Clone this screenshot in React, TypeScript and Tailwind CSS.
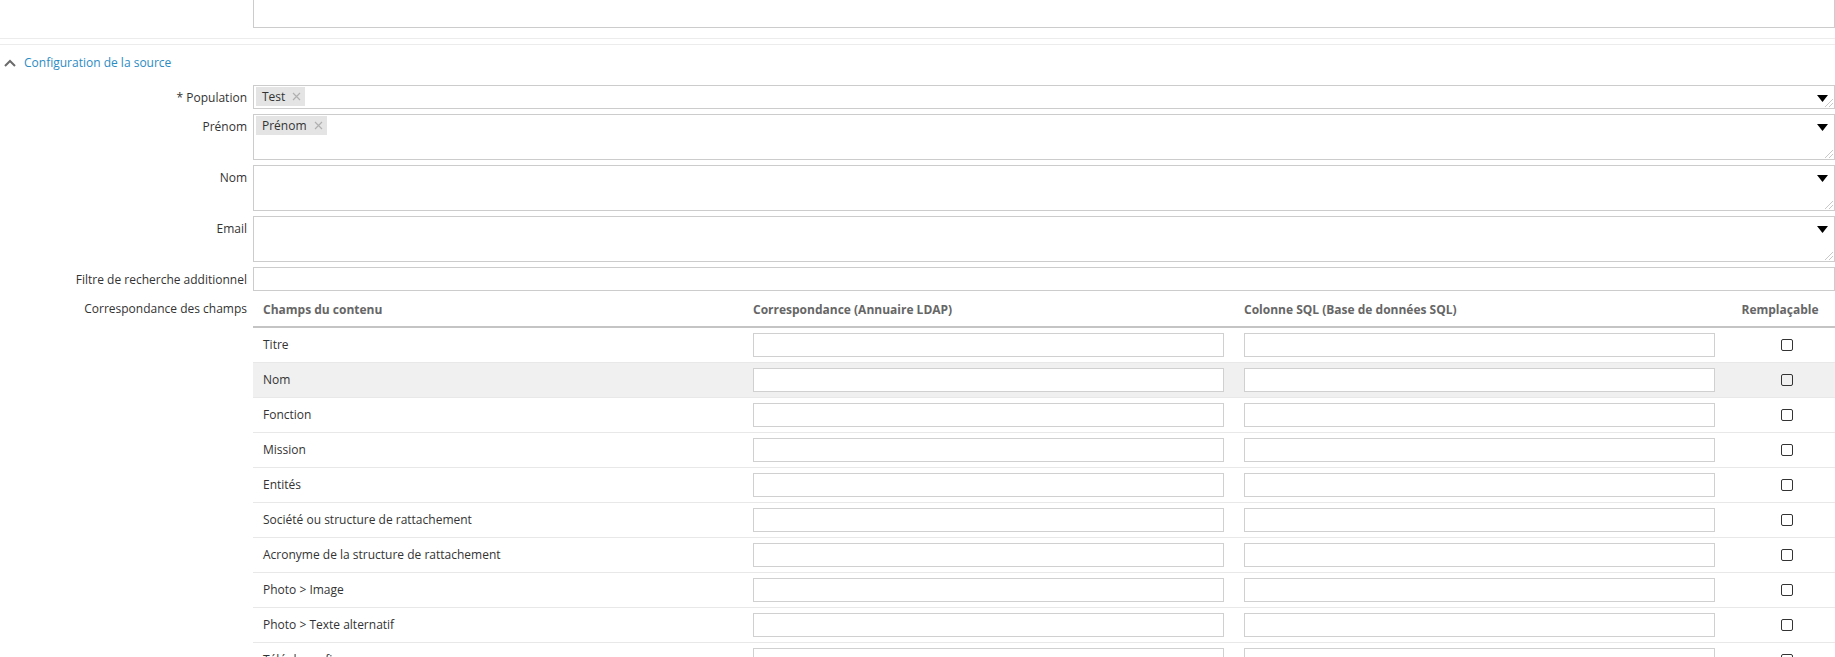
import type { ReactNode } from 'react'

const rows = [
  'Titre',
  'Nom',
  'Fonction',
  'Mission',
  'Entités',
  'Société ou structure de rattachement',
  'Acronyme de la structure de rattachement',
  'Photo > Image',
  'Photo > Texte alternatif',
  'Téléphone fixe',
]

function Arrow() {
  return (
    <svg className="absolute right-[6px] top-[9px]" width="11" height="7" viewBox="0 0 11 7">
      <path d="M0 0 H11 L5.5 7 Z" fill="#000" />
    </svg>
  )
}

function Grip() {
  return (
    <svg className="absolute right-[1px] bottom-[1px]" width="9" height="9" viewBox="0 0 9 9">
      <path d="M9 1 L1 9 M9 5 L5 9" stroke="#c8c8c8" strokeWidth="1" />
    </svg>
  )
}

function Tag({ label }: { label: string }) {
  return (
    <span className="inline-flex h-[19px] items-center gap-[7px] bg-[#e4e4e4] pl-[6px] pr-[4px] text-[#333]">
      {label}
      <svg width="9" height="9" viewBox="0 0 9 9">
        <path d="M1 1 L8 8 M8 1 L1 8" stroke="#b0b0b0" strokeWidth="1.2" />
      </svg>
    </span>
  )
}

function FormRow({ label, children }: { label: string; children: ReactNode }) {
  return (
    <div className="flex gap-[6px]">
      <div className="w-[247px] shrink-0 pt-[4px] text-right leading-[18px] text-[#333]">{label}</div>
      <div className="flex-1">{children}</div>
    </div>
  )
}

function SelectBox({ tag, tall }: { tag?: string; tall?: boolean }) {
  return (
    <div
      className={`relative flex items-start border border-[#cccccc] bg-white pl-[2px] pt-[1px] ${
        tall ? 'h-[46px]' : 'h-[24px]'
      }`}
    >
      {tag && <Tag label={tag} />}
      <Arrow />
      <Grip />
    </div>
  )
}

export default function App() {
  return (
    <div
      className="h-[657px] w-[1835px] overflow-hidden bg-white text-[12px] text-[#333]"
      style={{ fontFamily: '"Open Sans", "Noto Sans", sans-serif' }}
    >
      {/* previous field */}
      <div className="ml-[253px] h-[28px] border-x border-b border-[#cccccc]" />
      <div className="mt-[10px] border-t border-[#ececec]" />
      <div className="mt-[5px] border-t border-[#ececec]" />

      {/* section header */}
      <div className="flex h-[35px] items-center gap-[8px] pl-[4px]">
        <svg width="12" height="8" viewBox="0 0 12 8">
          <path d="M1 7 L6 2 L11 7" stroke="#6b6b6b" strokeWidth="2" fill="none" />
        </svg>
        <span className="text-[#2b8cc4]">Configuration de la source</span>
      </div>

      <div className="mt-[5px] flex flex-col gap-[5px]">
        <FormRow label="* Population">
          <SelectBox tag="Test" />
        </FormRow>
        <FormRow label="Prénom">
          <SelectBox tag="Prénom" tall />
        </FormRow>
        <FormRow label="Nom">
          <SelectBox tall />
        </FormRow>
        <FormRow label="Email">
          <SelectBox tall />
        </FormRow>
        <FormRow label="Filtre de recherche additionnel">
          <div className="h-[24px] border border-[#cccccc]" />
        </FormRow>

        <FormRow label="Correspondance des champs">
          <div className="grid grid-cols-[490px_491px_491px_1fr]">
            <div className="contents font-bold text-[#666]">
              <div className="flex h-[32px] items-center border-b-2 border-[#c4c4c4] pb-[3px] pl-[10px]">
                Champs du contenu
              </div>
              <div className="flex h-[32px] items-center border-b-2 border-[#c4c4c4] pb-[3px] pl-[10px]">
                Correspondance (Annuaire LDAP)
              </div>
              <div className="flex h-[32px] items-center border-b-2 border-[#c4c4c4] pb-[3px] pl-[10px]">
                Colonne SQL (Base de données SQL)
              </div>
              <div className="flex h-[32px] items-center justify-center border-b-2 border-[#c4c4c4] pb-[3px]">
                Remplaçable
              </div>
            </div>
            {rows.map((r, i) => {
              const bg = i === 1 ? 'bg-[#f0f0f0]' : 'bg-white'
              return (
                <div key={r} className="contents">
                  <div className={`flex h-[35px] items-center border-b border-[#e8e8e8] pl-[10px] ${bg}`}>{r}</div>
                  <div className={`flex h-[35px] items-center border-b border-[#e8e8e8] px-[10px] ${bg}`}>
                    <div className="h-[24px] w-full border border-[#d0d0d0] bg-white" />
                  </div>
                  <div className={`flex h-[35px] items-center border-b border-[#e8e8e8] px-[10px] ${bg}`}>
                    <div className="h-[24px] w-full border border-[#d0d0d0] bg-white" />
                  </div>
                  <div className={`flex h-[35px] items-center justify-center border-b border-[#e8e8e8] pl-[14px] ${bg}`}>
                    <div className="h-[12px] w-[12px] rounded-[2px] border border-[#333]" />
                  </div>
                </div>
              )
            })}
          </div>
        </FormRow>
      </div>
    </div>
  )
}
